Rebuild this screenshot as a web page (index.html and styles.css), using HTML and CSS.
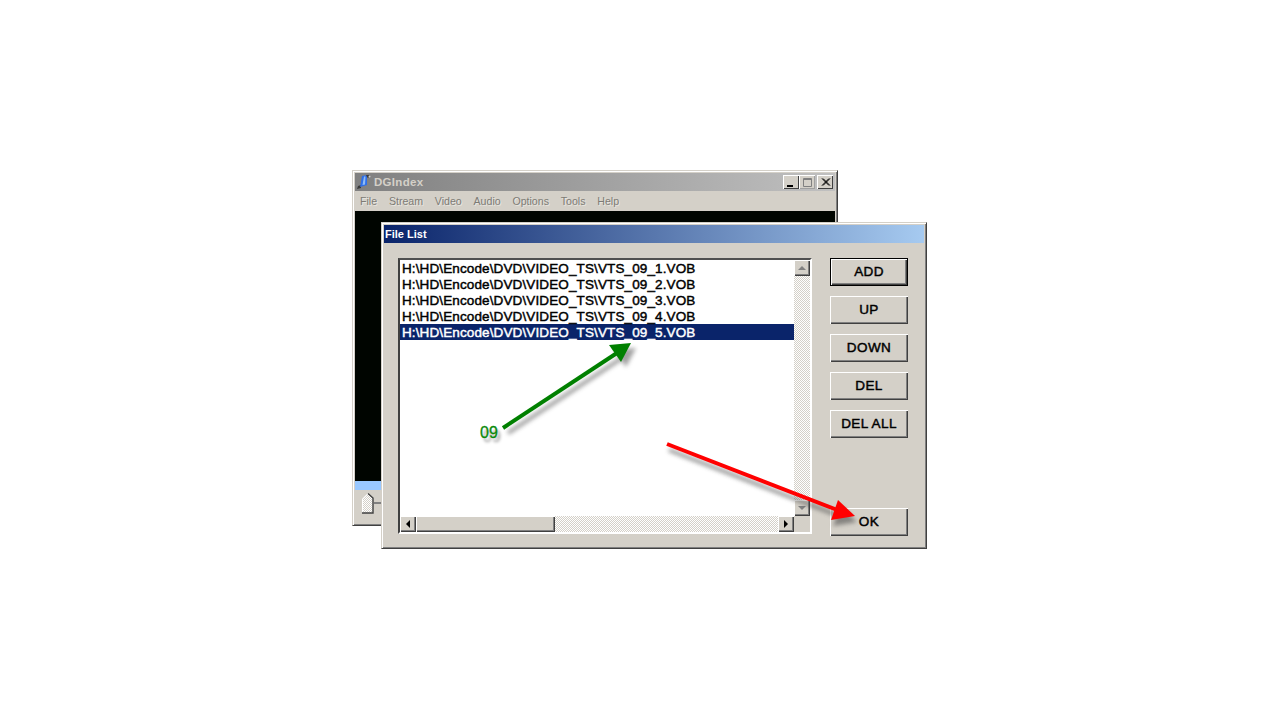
FILE: index.html
```html
<!DOCTYPE html>
<html lang="en">
<head>
  <meta charset="UTF-8">
  <meta name="viewport" content="width=device-width, initial-scale=1.0">
  <title>DGIndex - File List</title>
  <link rel="stylesheet" href="styles.css">
</head>
<body>
  <div class="desktop">

    <!-- back window -->
    <div class="window main-window">
      <div class="main-title">
        <svg class="app-icon" width="16" height="16" viewBox="0 0 16 16">
          <path d="M1 15 L2 12 L5 11 L5 14 Z" fill="#3a3a3a"/>
          <path d="M4 13 L6 2 L11 1 L11 11 Z" fill="#2f6fe8"/>
          <path d="M6.5 11 L8 2.5 L9.5 2.5 L9 10.5 Z" fill="#8fbcf6"/>
          <path d="M10 1 L13 1 L14 2 L12 4 L11 3 Z" fill="#3a3a3a"/>
          <circle cx="13.5" cy="2.5" r="1" fill="#d0d0d0"/>
        </svg>
        <span class="main-title-text">DGIndex</span>
        <div class="caption-buttons">
          <div class="caption-btn"><svg width="15" height="13" viewBox="0 0 15 13"><rect x="3" y="9" width="6" height="2" fill="#000"/></svg></div>
          <div class="caption-btn caption-off"><svg width="15" height="13" viewBox="0 0 15 13"><path d="M3.5 2.5 H11.5 V10.5 H3.5 Z M3 3.5 H12" fill="none" stroke="#808080"/></svg></div>
          <div class="caption-btn close-btn"><svg width="15" height="13" viewBox="0 0 15 13"><path d="M4 2.5 L11 9.5 M5 2.5 L12 9.5 M11 2.5 L4 9.5 M12 2.5 L5 9.5" stroke="#000" fill="none"/></svg></div>
        </div>
      </div>
      <div class="menu-bar">
        <span class="menu-item">File</span>
        <span class="menu-item">Stream</span>
        <span class="menu-item">Video</span>
        <span class="menu-item">Audio</span>
        <span class="menu-item">Options</span>
        <span class="menu-item">Tools</span>
        <span class="menu-item">Help</span>
      </div>
      <div class="video-area"></div>
      <div class="progress-strip"></div>
      <div class="toolbar">
        <svg class="slider-thumb" width="12" height="21" viewBox="0 0 12 21">
          <defs>
            <pattern id="dither" width="2" height="2" patternUnits="userSpaceOnUse">
              <rect width="2" height="2" fill="#d4d0c8"/>
              <rect width="1" height="1" fill="#fff"/>
              <rect x="1" y="1" width="1" height="1" fill="#fff"/>
            </pattern>
          </defs>
          <path d="M0.5 20 V6 L6 0.5 L11 5 V20 Z" fill="url(#dither)"/>
          <path d="M0.5 20 V6 L6 0.5" fill="none" stroke="#fff"/>
          <path d="M6 0.5 L11 5 V20 H0" fill="none" stroke="#404040" stroke-width="1.4"/>
        </svg>
        <div class="slider-line"></div>
      </div>
    </div>

    <!-- file list dialog -->
    <div class="window dialog">
      <div class="dialog-title">File List</div>
      <div class="dialog-body">
        <div class="list-box">
          <div class="list-main">
            <div class="rows">
              <div class="row">H:\HD\Encode\DVD\VIDEO_TS\VTS_09_1.VOB</div>
              <div class="row">H:\HD\Encode\DVD\VIDEO_TS\VTS_09_2.VOB</div>
              <div class="row">H:\HD\Encode\DVD\VIDEO_TS\VTS_09_3.VOB</div>
              <div class="row">H:\HD\Encode\DVD\VIDEO_TS\VTS_09_4.VOB</div>
              <div class="row selected">H:\HD\Encode\DVD\VIDEO_TS\VTS_09_5.VOB</div>
            </div>
            <div class="vscroll">
              <div class="scroll-btn"><span class="tri tri-up"></span></div>
              <div class="scroll-track"></div>
              <div class="scroll-btn"><span class="tri tri-down"></span></div>
            </div>
          </div>
          <div class="hscroll">
            <div class="scroll-btn"><span class="tri tri-left"></span></div>
            <div class="scroll-thumb"></div>
            <div class="scroll-track"></div>
            <div class="scroll-btn"><span class="tri tri-right"></span></div>
            <div class="scroll-corner"></div>
          </div>
        </div>
        <div class="buttons">
          <div class="btn btn-default">ADD</div>
          <div class="btn">UP</div>
          <div class="btn">DOWN</div>
          <div class="btn">DEL</div>
          <div class="btn">DEL ALL</div>
          <div class="btn btn-ok">OK</div>
        </div>
      </div>
    </div>

    <!-- annotations -->
    <svg class="arrows" width="1280" height="720" viewBox="0 0 1280 720">
      <defs>
        <filter id="soft" x="-20%" y="-20%" width="140%" height="140%">
          <feGaussianBlur stdDeviation="2.2"/>
        </filter>
      </defs>
      <g opacity="0.55" fill="#555" stroke="#555" filter="url(#soft)" transform="translate(5 5)">
        <path d="M503 428 L620 351" stroke-width="4" fill="none"/>
        <path d="M631 343 L609 345 L621 362 Z" stroke="none"/>
      </g>
      <path d="M503 428 L620 351" stroke="#008000" stroke-width="4" fill="none"/>
      <path d="M631 343 L609 345 L621 362 Z" fill="#008000"/>
      <g opacity="0.55" fill="#444" stroke="#444" filter="url(#soft)" transform="translate(2 6)">
        <path d="M667 444 L840 511" stroke-width="4" fill="none"/>
        <path d="M855 516 L838 500 L831 520 Z" stroke="none"/>
      </g>
      <path d="M667 444 L840 511" stroke="#ff0000" stroke-width="4" fill="none"/>
      <path d="M855 516 L838 500 L831 520 Z" fill="#ff0000"/>
    </svg>
    <div class="note">09</div>
  </div>
</body>
</html>
```

FILE: styles.css
```css
body {
  margin: 0;
  background: #fff;
  font-family: "Liberation Sans", Arial, sans-serif;
}
.desktop {
  position: relative;
  width: 1280px;
  height: 720px;
  overflow: hidden;
}

/* windows */
.window {
  position: absolute;
  box-sizing: border-box;
  display: flex;
  flex-direction: column;
  background: #d4d0c8;
  border-top: 1px solid #d4d0c8;
  border-left: 1px solid #d4d0c8;
  border-right: 1px solid #404040;
  border-bottom: 1px solid #404040;
  box-shadow: inset 1px 1px 0 #fff, inset -1px -1px 0 #808080;
  padding: 2px 2px;
}
.main-window {
  left: 352px;
  top: 170px;
  width: 486px;
  height: 356px;
}
.dialog {
  left: 381px;
  top: 222px;
  width: 546px;
  height: 327px;
}

/* back window */
.main-title {
  height: 18px;
  flex: none;
  display: flex;
  align-items: center;
  background: linear-gradient(to right, #808080, #c0c0c0);
}
.app-icon {
  flex: none;
  margin-left: 1px;
}
.main-title-text {
  font-size: 11.5px;
  font-weight: bold;
  color: #d4d0c8;
  margin-left: 2px;
  letter-spacing: 0.3px;
}
.caption-buttons {
  margin-left: auto;
  margin-right: 2px;
  display: flex;
}
.caption-btn {
  box-sizing: border-box;
  width: 16px;
  height: 14px;
  background: #d4d0c8;
  box-shadow: inset 1px 1px 0 #fff, inset -1px -1px 0 #404040;
  display: flex;
  align-items: center;
  justify-content: center;
}
.caption-off {
  box-shadow: inset 1px 1px 0 #fff, inset -1px -1px 0 #a0a0a0;
}
.close-btn {
  margin-left: 2px;
}
.menu-bar {
  height: 20px;
  flex: none;
  display: flex;
  align-items: center;
  padding-left: 5px;
  gap: 11.8px;
  font-size: 10.6px;
  color: #7d7b75;
  text-shadow: 1px 1px 0 #e8e6e0;
}
.video-area {
  flex: 1;
  background: #000500;
}
.progress-strip {
  height: 9px;
  flex: none;
  background: #99c8ff;
}
.toolbar {
  box-sizing: border-box;
  height: 33px;
  flex: none;
  display: flex;
  align-items: flex-start;
  padding: 3px 0 0 7px;
}
.slider-thumb {
  flex: none;
}
.slider-line {
  flex: 1;
  height: 2px;
  margin-top: 9px;
  background: #808080;
}

/* dialog */
.dialog-title {
  height: 18px;
  flex: none;
  box-sizing: border-box;
  padding: 1px 0 0 1px;
  font-size: 11px;
  line-height: 16px;
  font-weight: bold;
  color: #fff;
  background: linear-gradient(to right, #0a246a, #a6caf0);
}
.dialog-body {
  flex: 1;
  display: flex;
  padding: 15px 17px 11px 14px;
  gap: 18px;
}
.list-box {
  box-sizing: border-box;
  width: 414px;
  height: 276px;
  flex: none;
  display: flex;
  flex-direction: column;
  background: #fff;
  border: 2px solid;
  border-color: #404040 #fff #fff #404040;
  border-top-color: #505050;
  box-shadow: 1px 1px 0 #d4d0c8;
}
.list-main {
  flex: 1;
  display: flex;
  min-height: 0;
}
.rows {
  flex: 1;
  font-size: 13.5px;
  letter-spacing: 0.12px;
  -webkit-text-stroke: 0.45px currentColor;
  color: #000;
}
.row {
  height: 16px;
  line-height: 17px;
  padding-left: 2px;
  white-space: nowrap;
}
.row.selected {
  background: #0a246a;
  color: #fff;
}

/* scrollbars */
.vscroll {
  width: 16px;
  flex: none;
  display: flex;
  flex-direction: column;
}
.hscroll {
  height: 16px;
  flex: none;
  display: flex;
}
.scroll-btn {
  box-sizing: border-box;
  width: 16px;
  height: 16px;
  flex: none;
  display: flex;
  align-items: center;
  justify-content: center;
  background: #d4d0c8;
  box-shadow: inset 1px 1px 0 #fff, inset -1px -1px 0 #404040, inset -2px -2px 0 #808080;
}
.scroll-track {
  flex: 1;
  background: conic-gradient(#fff 25%, #d4d0c8 0 50%, #fff 0 75%, #d4d0c8 0) 0 0 / 2px 2px;
}
.scroll-thumb {
  box-sizing: border-box;
  width: 139px;
  flex: none;
  background: #d4d0c8;
  box-shadow: inset 1px 1px 0 #fff, inset -1px -1px 0 #404040, inset -2px -2px 0 #808080;
}
.scroll-corner {
  width: 16px;
  flex: none;
  background: #d4d0c8;
}
.tri {
  width: 0;
  height: 0;
  border-style: solid;
  border-color: transparent;
}
.tri-up {
  border-width: 0 4px 4px;
  border-bottom-color: #808080;
}
.tri-down {
  border-width: 4px 4px 0;
  border-top-color: #808080;
}
.tri-left {
  border-width: 4px 4px 4px 0;
  border-right-color: #000;
}
.tri-right {
  border-width: 4px 0 4px 4px;
  border-left-color: #000;
}

/* buttons */
.buttons {
  width: 78px;
  height: 278px;
  flex: none;
  display: flex;
  flex-direction: column;
  gap: 10px;
}
.btn {
  box-sizing: border-box;
  height: 28px;
  flex: none;
  display: flex;
  align-items: center;
  justify-content: center;
  padding-bottom: 2px;
  font-size: 13.5px;
  letter-spacing: 0.4px;
  -webkit-text-stroke: 0.45px currentColor;
  color: #000;
  background: #d4d0c8;
  box-shadow: inset 1px 1px 0 #fff, inset -1px -1px 0 #404040, inset -2px -2px 0 #808080;
}
.btn-default {
  border: 1px solid #000;
}
.btn-ok {
  margin-top: auto;
}

/* annotations */
.arrows {
  position: absolute;
  left: 0;
  top: 0;
}
.note {
  position: absolute;
  left: 480px;
  top: 424px;
  font-size: 16px;
  line-height: 18px;
  -webkit-text-stroke: 0.3px #0a8a0a;
  color: #0a8a0a;
  text-shadow: 3px 4px 3px rgba(0, 0, 0, 0.4);
}
```
